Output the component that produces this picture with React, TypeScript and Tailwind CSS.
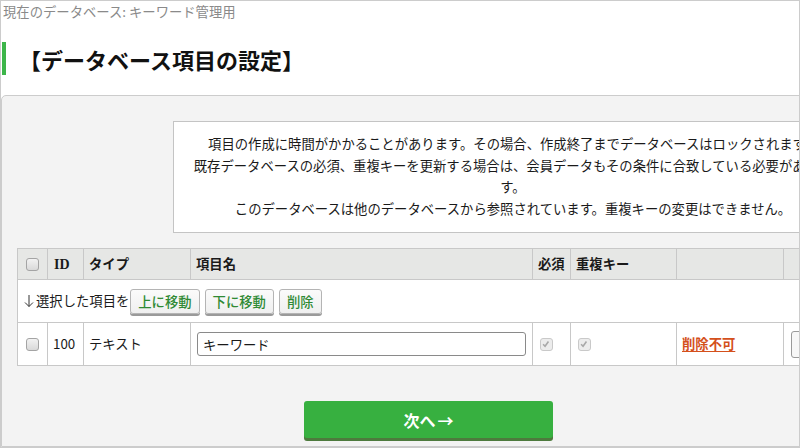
import React from 'react';

/** チェックボックス（見た目だけ） */
const Check: React.FC<{ checked?: boolean; disabled?: boolean }> = ({ checked, disabled }) => (
  <span
    className={
      disabled
        ? 'relative inline-block w-[13px] h-[13px] rounded-[3px] border border-[#c9c9c9] bg-[#ececec]'
        : 'relative inline-block w-[13px] h-[13px] rounded-[3px] border border-[#a4a4a4] bg-gradient-to-b from-[#f2f2f2] to-[#d9d9d9]'
    }
  >
    {checked && (
      <svg viewBox="0 0 13 13" className="absolute inset-0 w-[11px] h-[11px]">
        <path d="M2.5 6.2 L4.8 8.6 L8.8 3" fill="none" stroke="#a8a8a8" strokeWidth="1.9" />
      </svg>
    )}
  </span>
);

const SubButton: React.FC<{ label: string }> = ({ label }) => (
  <button className="h-[25px] px-[7px] rounded-[3px] border border-[#b4b4b4] bg-gradient-to-b from-[#fbfbfb] to-[#efefef] shadow-[0_2px_0_#9a9a9a] text-[#2f8a34] font-medium leading-[23px]">
    {label}
  </button>
);

const COLS = ['w-[30px]', 'w-[36px]', 'w-[107px]', 'w-[342px]', 'w-[38px]', 'w-[106px]', 'w-[107px]', 'w-[140px]'];

export default function App() {
  return (
    <div className="w-[800px] h-[448px] overflow-hidden border border-[#cccccc] bg-white font-['Noto_Sans_CJK_JP',sans-serif] text-[13.33px] text-[#1a1a1a]">
      {/* 現在のデータベース */}
      <div className="pl-[2px] leading-[22px] text-[#8a8a8a] whitespace-nowrap">現在のデータベース: キーワード管理用</div>

      {/* 見出し */}
      <div className="mt-[19px] ml-px h-[33px] border-l-4 border-[#3db54a] pl-[13px] flex items-center">
        <h1 className="text-[22px] font-bold leading-none text-[#111] whitespace-nowrap">【データベース項目の設定】</h1>
      </div>

      {/* パネル */}
      <div className="mt-[20px] w-[1100px] h-[352px] border border-[#cccccc] rounded-tl-[5px] bg-[#f3f3f3] pt-[25px]">
        <div className="ml-[171px] w-[680px] border border-[#c4c4c4] bg-white px-[15px] pt-[11px] pb-[13px] text-center leading-[21.5px]">
          <p>項目の作成に時間がかかることがあります。その場合、作成終了までデータベースはロックされます。</p>
          <p>既存データベースの必須、重複キーを更新する場合は、会員データもその条件に合致している必要があります。</p>
          <p>このデータベースは他のデータベースから参照されています。重複キーの変更はできません。</p>
        </div>

        {/* 項目テーブル */}
        <div className="mt-[15px] ml-[15px] w-fit border-l border-t border-[#c8c8c8] bg-white">
          <div className="flex h-[31px] border-b border-[#c8c8c8] bg-[#e6e7e5] font-bold">
            <div className={`${COLS[0]} border-r border-[#c8c8c8] flex items-center justify-center`}>
              <Check />
            </div>
            <div className={`${COLS[1]} border-r border-[#c8c8c8] flex items-center px-[6px] font-['Liberation_Serif',serif] text-[14px]`}>ID</div>
            <div className={`${COLS[2]} border-r border-[#c8c8c8] flex items-center px-[5px]`}>タイプ</div>
            <div className={`${COLS[3]} border-r border-[#c8c8c8] flex items-center px-[5px]`}>項目名</div>
            <div className={`${COLS[4]} border-r border-[#c8c8c8] flex items-center px-[5px] whitespace-nowrap`}>必須</div>
            <div className={`${COLS[5]} border-r border-[#c8c8c8] flex items-center px-[5px]`}>重複キー</div>
            <div className={`${COLS[6]} border-r border-[#c8c8c8]`} />
            <div className={`${COLS[7]} border-r border-[#c8c8c8]`} />
          </div>

          <div className="flex items-center h-[43px] border-b border-r border-[#c8c8c8] pl-[6px] gap-[5px]">
            <span className="mr-[-4px] flex items-center">
              <svg viewBox="0 0 10 14" className="w-[10px] h-[14px] mr-[2px]">
                <path d="M5 1 V12.5 M1 8.5 L5 12.5 L9 8.5" fill="none" stroke="#333" strokeWidth="1" />
              </svg>
              選択した項目を
            </span>
            <SubButton label="上に移動" />
            <SubButton label="下に移動" />
            <SubButton label="削除" />
          </div>

          <div className="flex h-[43px] border-b border-[#c8c8c8]">
            <div className={`${COLS[0]} border-r border-[#c8c8c8] flex items-center justify-center`}>
              <Check />
            </div>
            <div className={`${COLS[1]} border-r border-[#c8c8c8] flex items-center px-[5px]`}>100</div>
            <div className={`${COLS[2]} border-r border-[#c8c8c8] flex items-center px-[5px]`}>テキスト</div>
            <div className={`${COLS[3]} border-r border-[#c8c8c8] flex items-center pl-[6px]`}>
              <input
                readOnly
                value="キーワード"
                className="w-[329px] h-[24px] rounded-[3px] border border-[#8a8a8a] bg-white px-[5px] outline-none text-[13.33px]"
              />
            </div>
            <div className={`${COLS[4]} border-r border-[#c8c8c8] flex items-center pl-[7px]`}>
              <Check checked disabled />
            </div>
            <div className={`${COLS[5]} border-r border-[#c8c8c8] flex items-center pl-[7px]`}>
              <Check checked disabled />
            </div>
            <div className={`${COLS[6]} border-r border-[#c8c8c8] flex items-center px-[5px]`}>
              <span className="font-bold text-[#d4501c] underline underline-offset-2">削除不可</span>
            </div>
            <div className={`${COLS[7]} border-r border-[#c8c8c8] flex items-center pl-[7px]`}>
              <span className="h-[27px] w-[60px] rounded-[3px] border border-[#9a9a9a] bg-[#f7f7f7]" />
            </div>
          </div>
        </div>

        {/* 次へ */}
        <button className="mt-[35px] ml-[302px] w-[249px] h-[37px] rounded-[3px] bg-[#37b040] shadow-[0_3px_0_#4d7a3d] text-white text-[16px] font-bold">
          次へ<span className="ml-[2px]">→</span>
        </button>
      </div>
    </div>
  );
}
